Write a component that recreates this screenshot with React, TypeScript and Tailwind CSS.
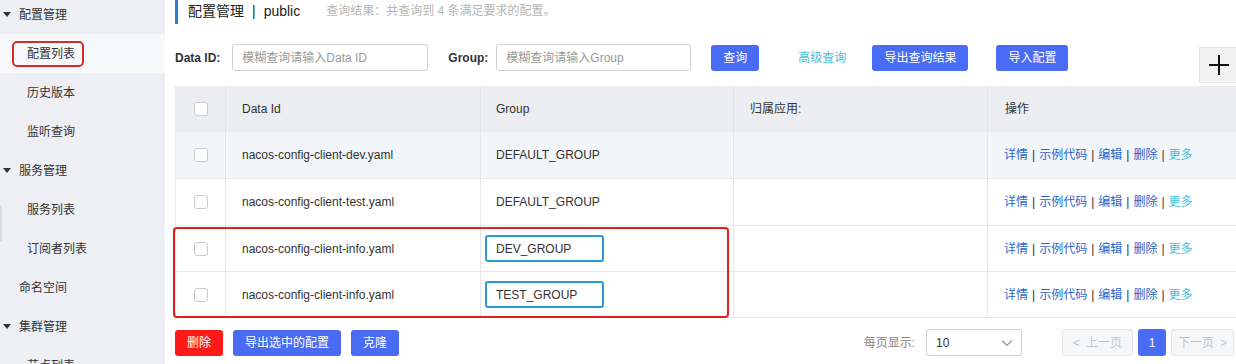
import React from "react";

const FONT = "font-['Liberation_Sans','Noto_Sans_CJK_SC',sans-serif]";

type SideItem = { t: string; lvl: 0 | 1; arrow?: boolean; active?: boolean };

const side: SideItem[] = [
  { t: "配置管理", lvl: 0, arrow: true },
  { t: "配置列表", lvl: 1, active: true },
  { t: "历史版本", lvl: 1 },
  { t: "监听查询", lvl: 1 },
  { t: "服务管理", lvl: 0, arrow: true },
  { t: "服务列表", lvl: 1 },
  { t: "订阅者列表", lvl: 1 },
  { t: "命名空间", lvl: 0 },
  { t: "集群管理", lvl: 0, arrow: true },
  { t: "节点列表", lvl: 1 },
];

function Sidebar() {
  return (
    <div className="relative w-[165px] shrink-0 bg-[#edeff4]">
      <div className="absolute left-0 top-[205px] h-[36px] w-[2px] bg-[#d9dbe0]" />
      <div className="-mt-[5px]">
        {side.map((s) => (
          <div
            key={s.t}
            className={`flex h-[39px] items-center text-[12px] text-[#333] ${
              s.active ? "bg-[#f7f8fa]" : ""
            } ${s.lvl === 1 ? (s.active ? "pl-[12px]" : "pl-[27px]") : s.arrow ? "pl-[3px]" : "pl-[19px]"}`}
          >
            {s.arrow && (
              <span className="mr-[8px] h-0 w-0 border-x-[4px] border-t-[5px] border-x-transparent border-t-[#333]" />
            )}
            {s.active ? (
              <span className="flex h-[26px] items-center rounded-[5px] border-2 border-[#d42a2a] pl-[13px] pr-[7px]">
                {s.t}
              </span>
            ) : (
              <span>{s.t}</span>
            )}
          </div>
        ))}
      </div>
    </div>
  );
}

function Checkbox() {
  return <div className="h-[14px] w-[14px] rounded-[3px] border border-[#c9cbd2] bg-white" />;
}

function Btn({ children, red }: { children: React.ReactNode; red?: boolean }) {
  return (
    <button
      className={`flex h-[26px] items-center justify-center rounded-[3px] px-[12px] text-[12px] text-white ${
        red ? "bg-[#ff1a1a]" : "bg-[#4a6cf5]"
      }`}
    >
      {children}
    </button>
  );
}

function Actions() {
  const sep = <span className="mx-[4px] text-[#333]">|</span>;
  return (
    <div className="flex items-center text-[12px] text-[#2e64c8]">
      <span>详情</span>
      {sep}
      <span>示例代码</span>
      {sep}
      <span>编辑</span>
      {sep}
      <span>删除</span>
      {sep}
      <span className="text-[#3fc0da]">更多</span>
    </div>
  );
}

type Row = { id: string; group: string; boxed?: boolean; h: string; bg?: string };

const rows: Row[] = [
  { id: "nacos-config-client-dev.yaml", group: "DEFAULT_GROUP", h: "h-[47px]", bg: "bg-[#f2f5f9]" },
  { id: "nacos-config-client-test.yaml", group: "DEFAULT_GROUP", h: "h-[47px]" },
  { id: "nacos-config-client-info.yaml", group: "DEV_GROUP", boxed: true, h: "h-[46px]" },
  { id: "nacos-config-client-info.yaml", group: "TEST_GROUP", boxed: true, h: "h-[46px]" },
];

const GRID = "grid grid-cols-[50px_255px_253px_254px_1fr]";

function Table() {
  return (
    <div className="relative mt-[3px] border-l border-[#e6e6e6]">
      <div className={`${GRID} h-[46px] bg-[#ebedf1] text-[12px] text-[#333]`}>
        <div className="flex items-center justify-center border-r border-[#e2e4e8]">
          <Checkbox />
        </div>
        <div className="flex items-center border-r border-[#e2e4e8] pl-[16px]">Data Id</div>
        <div className="flex items-center border-r border-[#e2e4e8] pl-[15px]">Group</div>
        <div className="flex items-center border-r border-[#e2e4e8] pl-[16px]">归属应用:</div>
        <div className="flex items-center pl-[17px]">操作</div>
      </div>
      {rows.map((r, i) => (
        <div
          key={i}
          className={`${GRID} ${r.h} ${r.bg ?? "bg-white"} border-b border-[#e6e6e6] text-[12px] text-[#333]`}
        >
          <div className="flex items-center justify-center border-r border-[#e6e6e6]">
            <Checkbox />
          </div>
          <div className="flex items-center border-r border-[#e6e6e6] pl-[16px]">{r.id}</div>
          <div className={`flex items-center border-r border-[#e6e6e6] ${r.boxed ? "pl-[4px]" : "pl-[15px]"}`}>
            {r.boxed ? (
              <div className="flex h-[27px] w-[119px] items-center rounded-[3px] border-2 border-[#2b9ad6] pl-[9px]">
                {r.group}
              </div>
            ) : (
              r.group
            )}
          </div>
          <div className="border-r border-[#e6e6e6]" />
          <div className="flex items-center pl-[16px]">
            <Actions />
          </div>
        </div>
      ))}
      <div className="pointer-events-none absolute left-[-3px] top-[141px] h-[91px] w-[556px] rounded-[4px] border-2 border-[#e0201f]" />
    </div>
  );
}

export default function App() {
  return (
    <div className={`flex h-[364px] w-[1236px] overflow-hidden bg-white ${FONT}`}>
      <Sidebar />
      <div className="min-w-0 flex-1 overflow-hidden pl-[10px]">
        <div className="w-[1061px]">
          {/* title */}
          <div className="flex h-[24px] items-center">
            <div className="h-[24px] w-[3px] bg-[#2c7fc9]" />
            <span className="ml-[10px] -mt-[2px] text-[14px] text-[#222]">配置管理</span>
            <span className="mx-[8px] -mt-[2px] text-[14px] text-[#222]">|</span>
            <span className="-mt-[2px] text-[14px] text-[#222]">public</span>
            <span className="ml-[26px] -mt-[2px] text-[12px] text-[#b5b5b5]">
              查询结果：共查询到 4 条满足要求的配置。
            </span>
          </div>

          {/* filters */}
          <div className="mt-[20px] flex items-start">
            <div className="flex h-[27px] items-center">
              <span className="text-[12px] font-bold text-[#333]">Data ID:</span>
              <div className="ml-[12px] flex h-[27px] w-[196px] items-center rounded-[3px] border border-[#cfd1d6] pl-[9px] text-[12px] text-[#9a9a9a]">
                模糊查询请输入Data ID
              </div>
              <span className="ml-[20px] text-[12px] font-bold text-[#333]">Group:</span>
              <div className="ml-[8px] flex h-[27px] w-[195px] items-center rounded-[3px] border border-[#cfd1d6] pl-[9px] text-[12px] text-[#9a9a9a]">
                模糊查询请输入Group
              </div>
              <div className="ml-[20px]">
                <Btn>查询</Btn>
              </div>
              <span className="ml-[39px] text-[12px] text-[#3fc0da]">高级查询</span>
              <div className="ml-[26px]">
                <Btn>导出查询结果</Btn>
              </div>
              <div className="ml-[28px]">
                <Btn>导入配置</Btn>
              </div>
            </div>
            <div className="-mr-[3px] ml-auto mt-[3px] flex h-[36px] w-[40px] items-center justify-center border border-[#e3e3e3] bg-[#f2f2f2]">
              <svg width="22" height="22" viewBox="0 0 22 22">
                <path d="M11 1v20M1 11h20" stroke="#111" strokeWidth="2" />
              </svg>
            </div>
          </div>

          <Table />

          {/* bottom */}
          <div className="mt-[11px] flex items-center">
            <Btn red>删除</Btn>
            <div className="ml-[10px]">
              <Btn>导出选中的配置</Btn>
            </div>
            <div className="ml-[10px]">
              <Btn>克隆</Btn>
            </div>
            <div className="ml-auto mr-[2px] flex items-center">
              <span className="text-[12px] text-[#888]">每页显示:</span>
              <div className="ml-[11px] flex h-[27px] w-[96px] items-center justify-between rounded-[3px] border border-[#cfd1d6] pl-[9px] pr-[8px] text-[12px] text-[#333]">
                <span>10</span>
                <svg width="12" height="8" viewBox="0 0 12 8">
                  <path d="M1 1.5l5 5 5-5" fill="none" stroke="#999" strokeWidth="1.2" />
                </svg>
              </div>
              <div className="ml-[40px] flex h-[27px] w-[71px] items-center justify-center rounded-[3px] border border-[#e4e6ea] bg-[#f6f7f9] text-[12px] text-[#c3c5cc]">
                <span className="mr-[6px]">&lt;</span>上一页
              </div>
              <div className="ml-[5px] flex h-[27px] w-[28px] items-center justify-center rounded-[3px] bg-[#4a6cf5] text-[12px] text-white">
                1
              </div>
              <div className="ml-[5px] flex h-[27px] w-[63px] items-center justify-center rounded-[3px] border border-[#e4e6ea] bg-[#f6f7f9] text-[12px] text-[#c3c5cc]">
                下一页<span className="ml-[6px]">&gt;</span>
              </div>
            </div>
          </div>
        </div>
      </div>
    </div>
  );
}
